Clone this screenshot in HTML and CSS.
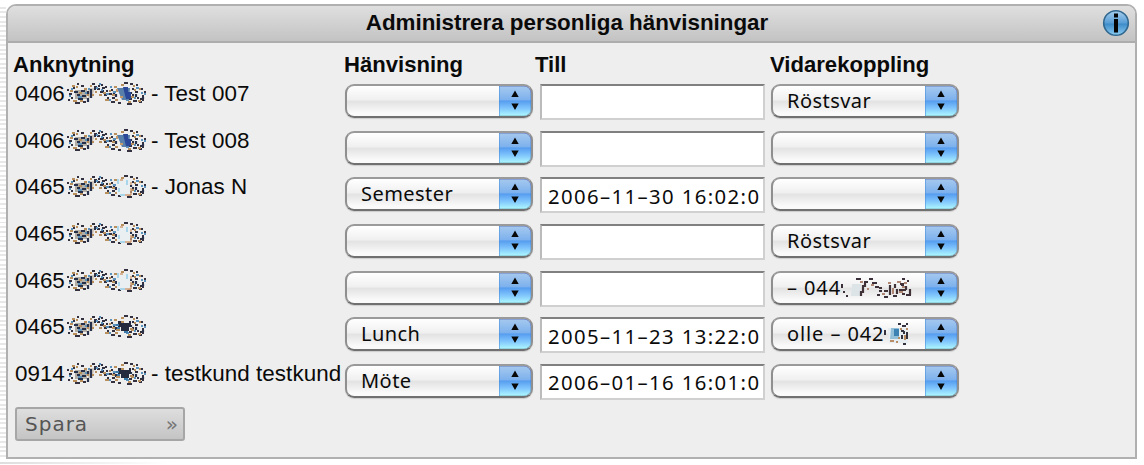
FILE: index.html
```
<!DOCTYPE html>
<html lang="sv">
<head>
    <meta charset="UTF-8">
    <title>Administrera personliga hänvisningar</title>
    <link rel="stylesheet" href="styles.css">
</head>
<body>
    <div class="panel">
        <div class="panel-header">
            <h1>Administrera personliga hänvisningar</h1>
            <svg class="info" viewBox="0 0 28 28">
                <defs>
                    <linearGradient id="infoBg" x1="0" y1="0" x2="0" y2="1">
                        <stop offset="0" stop-color="#a8cfee"/>
                        <stop offset="0.48" stop-color="#5a9fd6"/>
                        <stop offset="0.55" stop-color="#3f8dca"/>
                        <stop offset="1" stop-color="#8ccdf3"/>
                    </linearGradient>
                </defs>
                <circle cx="14" cy="14" r="12.3" fill="url(#infoBg)" stroke="#31688f" stroke-width="1.6"/>
                <path d="M12 4.500h4v4h-4zM12 10h4v13.500h-4z" fill="#050505"/>
            </svg>
        </div>
        <form id="hanvisningar" class="grid"></form>
        <button type="button" class="save"><span>Spara</span><span class="raquo">»</span></button>
    </div>

    <!-- Överstrukna nummer -->
    <svg width="0" height="0" class="defs">
        <symbol id="mask-base" viewBox="0 0 82 26">
            <path d="M9 9h12v9H9z" fill="#8a8375" opacity=".6"/>
            <path d="M22 7h7l-3 10h-4z" fill="#b9a78f" opacity=".5"/>
            <path d="M1 9h2M3 13h3M5 17h2M2 19h2M7 7h2M11 3h2M15 5h3M9 22h5M17 21h3M26 3h3M32 5h2M31 8h3M36 7h3M34 11h3M40 10h2M38 14h3M43 13h3M41 17h2M46 17h3M45 21h4M52 22h3M58 2h4M64 3h3M70 4h2M66 8h2M69 11h3M71 17h2M67 20h4M73 21h3M76 15h2M78 11h2M61 23h5M28 6h3M35 4h2M39 6h2M45 9h2M63 18h3M66 14h2M74 18h2M76 19h2M75 8h2" stroke="#33303f" stroke-width="2" fill="none"/>
            <path d="M8 11h4M15 10h4M11 14h3M16 15h4M12 18h5M22 10v3M22 17v4M25 8v9M28 8h2M36 10h2M48 10v3M50 13v3M70 13v3M77 16v2M65 11v2" stroke="#26304a" stroke-width="2.200" fill="none"/>
            <path d="M6 5h3M10 6h2M4 10h3M13 12h3M18 8h3M21 14h2M7 20h4M26 14h2M29 11h2M24 5h2M37 12h3M33 14h3M43 10h2M39 19h4M49 19h3M48 6h3M55 4h3M67 5h2M73 8h2M65 16h3M72 20h3M62 21h3M14 20h3M46 14h3M68 9h2" stroke="#b98f5c" stroke-width="2" fill="none"/>
            <path d="M3 15h2M12 16h4M19 12h2M22 8h2M30 7h2M35 9h2M40 13h3M47 11h3M43 19h2M68 17h2M75 12h2M70 7h3M60 19h3M5 8h2M33 3h2M44 6h2M78 13h2" stroke="#5a93be" stroke-width="2" fill="none"/>
        </symbol>
        <symbol id="mask-blue" viewBox="0 0 82 26">
            <use href="#mask-base"/>
            <path d="M51 7h13l-1 12h-7z" fill="#5880aa"/>
            <path d="M57 6h5v5h3v7h-5z" fill="#2b4798"/>
            <path d="M51 8v3M54 16h3" stroke="#c59a68" stroke-width="2"/>
        </symbol>
        <symbol id="mask-pale" viewBox="0 0 82 26">
            <use href="#mask-base"/>
            <path d="M51 5h13v16H51z" fill="#eaeff2"/>
            <path d="M52 5v5M53 14v4M54 21h5M61 6v5" stroke="#a9d6ea" stroke-width="2" fill="none"/>
            <path d="M54 6h3M59 21h6M65 8v3M65 14v7" stroke="#cf9f79" stroke-width="1.500" fill="none"/>
        </symbol>
        <symbol id="mask-dark" viewBox="0 0 82 26">
            <use href="#mask-base"/>
            <path d="M52 7h4v2h7V7h2v6h-2v4h-8v-4h-3z" fill="#252a3e"/>
            <path d="M50 11h3M51 14h3M58 18h4" stroke="#3a79a8" stroke-width="2"/>
            <path d="M55 8h3M50 16h4M64 15h3" stroke="#b98f5c" stroke-width="2"/>
        </symbol>
        <symbol id="mask-wide" viewBox="0 0 72 24">
            <path d="M11 8h9v12h-10z" fill="#dce4e8"/>
            <path d="M1 8v4M2 16h2M5 20h2M15 3h5M23 6h4M28 3h4M31 7h5M34 11h4M38 15h3M36 19h3M43 21h4M52 20h4M61 3h3M66 5h2M60 9h3M65 19h5" stroke="#3b3039" stroke-width="2"/>
            <path d="M24 7v3h-2v6h-2v4M38 12h3M43 15h4M49 9v10M54 8v4M56 13v5M59 8h4M65 10v4M69 13v6M58 14h7M61 18h3" stroke="#403237" stroke-width="2.200" fill="none"/>
            <path d="M19 6h3M26 13h2M30 9h3M41 18h3M47 7h3M52 12v6M56 6h4M63 7h3M61 11h3M58 16h4" stroke="#af8774" stroke-width="2" fill="none"/>
        </symbol>
        <symbol id="mask-small" viewBox="0 0 28 26">
            <path d="M4 7h20v15H5z" fill="#e6eef2"/>
            <path d="M7 7h8v11H6z" fill="#93bfd9"/>
            <path d="M10 8h5v7h-5z" fill="#3c83b3"/>
            <path d="M1 9v5M14 3h3M18 5h4M22 3h2M20 10v3M18 14v4M23 11v7M17 10h3M19 23h3" stroke="#33333f" stroke-width="2" fill="none"/>
            <path d="M16 8h2M22 8h2M14 17h2M21 14v5M6 20h4M12 21h2" stroke="#b98e64" stroke-width="2" fill="none"/>
        </symbol>
    </svg>

    <script src="script.js"></script>
</body>
</html>
```
FILE: styles.css
```
* {
    box-sizing: border-box;
}
body {
    margin: 0;
    height: 465px;
    padding: 4px 7px 6px 6px;
    overflow: hidden;
    font-family: "Liberation Sans", Arial, sans-serif;
    font-size: 22.4px;
    color: #0a0a0a;
    background:
        linear-gradient(to right, #dedede, #fff) 0 462px / 170px 2px no-repeat,
        repeating-linear-gradient(to bottom, #fff 0, #fff 2.7px, #e8e8e8 2.7px, #e8e8e8 4.67px) 0 4px / 6px 456px no-repeat,
        #fff;
}
.panel {
    height: 455px;
    border: 2px solid #b0b0b0;
    border-radius: 10px 10px 0 0;
    background: #eee;
    overflow: hidden;
}
.panel-header {
    display: flex;
    align-items: center;
    height: 37px;
    padding: 0 5px 2px 24px;
    border-bottom: 2px solid #adadad;
    background: linear-gradient(#dfdfdf, #c3c3c3);
}
h1 {
    flex: 1;
    margin: 0;
    font-size: 22.4px;
    line-height: 26px;
    letter-spacing: -0.02px;
    text-align: center;
}
.info {
    width: 28px;
    height: 28px;
}
.grid {
    display: grid;
    grid-template-columns: 330px 195px 231px 188px;
    grid-template-rows: 41px;
    grid-auto-rows: 46.67px;
    padding-left: 7px;
}
.head {
    padding-top: 9px;
    font-size: 22.1px;
    font-weight: bold;
    line-height: 26px;
    margin-left: -1px;
}
.head:first-child {
    margin-left: -2px;
}
.head.till {
    margin-left: -5px;
}
.number {
    display: flex;
    height: 20px;
    line-height: 20px;
    white-space: nowrap;
}
.number .mask {
    width: 82px;
    height: 26px;
    margin: -3px 3px 0 1px;
}
.number .digits {
    width: 50px;
}
.number .name {
    letter-spacing: 0.05px;
}
.select {
    display: flex;
    justify-content: space-between;
    width: 188px;
    height: 34px;
    border: 2px solid #8f8f8f;
    border-top-color: #9a9a9a;
    border-bottom-color: #707070;
    border-radius: 9px;
    background: linear-gradient(#fff, #f0f0f0 45%, #e3e3e3 52%, #fafafa 90%);
    overflow: hidden;
    box-shadow: 0 1px 1px #ccc;
}
.select .value {
    display: flex;
    padding-left: 14px;
    font-family: "Noto Sans", sans-serif;
    font-size: 20px;
    line-height: 29px;
    letter-spacing: 0.45px;
    white-space: pre;
}
.select .value.masked {
    letter-spacing: 0.9px;
}
.value .mask-wide {
    width: 72px;
    height: 24px;
    margin-top: 3px;
}
.value .mask-small {
    width: 28px;
    height: 26px;
    margin-top: 2px;
}
.arrows {
    width: 34px;
    height: 34px;
    margin: -2px -2px 0 0;
    flex-shrink: 0;
}
.date {
    width: 225px;
    height: 36px;
    padding: 1px 0 0 6px;
    border: 2px solid #d0d0d0;
    border-top: 2px solid #808080;
    border-left-color: #bbb;
    border-radius: 0;
    outline: none;
    background: #fff;
    color: #0a0a0a;
    font-family: "Noto Sans", sans-serif;
    font-size: 20.3px;
    letter-spacing: 1.4px;
}
.save {
    display: flex;
    justify-content: space-between;
    align-items: center;
    width: 170px;
    height: 34px;
    margin: -4px 0 0 7px;
    padding: 0 4px 0 8px;
    border: 2px solid #a6a6a6;
    border-radius: 3px;
    background: linear-gradient(#dedede, #c4c4c4);
    color: #555;
    font-family: "DejaVu Sans", Verdana, sans-serif;
    font-size: 20px;
    letter-spacing: 1px;
}
.raquo {
    color: #777;
}
.defs {
    display: block;
}
```
FILE: script.js
```
const rows = [
    { nr: '0406', mask: 'blue', name: '- Test 007', ref: '', till: '', vidare: 'Röstsvar' },
    { nr: '0406', mask: 'blue', name: '- Test 008', ref: '', till: '', vidare: '' },
    { nr: '0465', mask: 'pale', name: '- Jonas N', ref: 'Semester', till: '2006–11–30 16:02:0', vidare: '' },
    { nr: '0465', mask: 'pale', name: '', ref: '', till: '', vidare: 'Röstsvar' },
    { nr: '0465', mask: 'pale', name: '', ref: '', till: '', vidare: '– 044', vidareMask: 'wide' },
    { nr: '0465', mask: 'dark', name: '', ref: 'Lunch', till: '2005–11–23 13:22:0', vidare: 'olle – 042', vidareMask: 'small' },
    { nr: '0914', mask: 'dark', name: '- testkund testkund', ref: 'Möte', till: '2006–01–16 16:01:0', vidare: '' }
];

const arrows = `
    <svg class="arrows" viewBox="0 0 34 34">
        <defs>
            <linearGradient id="aqua" x1="0" y1="0" x2="0" y2="1">
                <stop offset="0" stop-color="#a9cbef"/>
                <stop offset="0.46" stop-color="#7db1ed"/>
                <stop offset="0.5" stop-color="#569df0"/>
                <stop offset="0.72" stop-color="#7fc4fc"/>
                <stop offset="1" stop-color="#b4ffff"/>
            </linearGradient>
            <linearGradient id="edge" x1="0" y1="0" x2="0" y2="1">
                <stop offset="0" stop-color="#28278b"/>
                <stop offset="0.5" stop-color="#1c5bc4"/>
                <stop offset="1" stop-color="#4b7886"/>
            </linearGradient>
        </defs>
        <path d="M0 1h25a8 8 0 0 1 8 8v16a8 8 0 0 1-8 8H0z" fill="url(#aqua)"/>
        <path d="M0 1h25a8 8 0 0 1 8 8v16a8 8 0 0 1-8 8H0" fill="none" stroke="url(#edge)" stroke-width="2.400"/>
        <path d="M0.500 2v30" stroke="#4b91dc" stroke-opacity=".6"/>
        <path d="M16 6.500l3.700 6.500h-7.400zM16 26l3.700-6.500h-7.400z" fill="#080808"/>
    </svg>`;

function select(text, mask) {
    const hidden = mask ? `<svg class="mask-${mask}"><use href="#mask-${mask}"/></svg>` : '';
    return `<div class="select"><span class="value${mask ? ' masked' : ''}">${text}${hidden}</span>${arrows}</div>`;
}

let html = `
    <div class="head">Anknytning</div>
    <div class="head">Hänvisning</div>
    <div class="head till">Till</div>
    <div class="head">Vidarekoppling</div>`;

rows.forEach(row => {
    html += `
        <div class="number">
            <span class="digits">${row.nr}</span>
            <svg class="mask"><use href="#mask-${row.mask}"/></svg>
            <span class="name">${row.name}</span>
        </div>
        <div>${select(row.ref)}</div>
        <div><input class="date" type="text" value="${row.till}"></div>
        <div>${select(row.vidare, row.vidareMask)}</div>`;
});

document.getElementById('hanvisningar').innerHTML = html;
```
